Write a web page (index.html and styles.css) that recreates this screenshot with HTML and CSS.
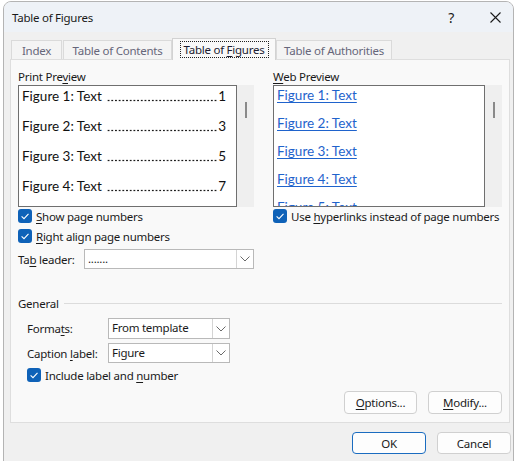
FILE: index.html
```html
<!DOCTYPE html>
<html>
<head>
<meta charset="utf-8">
<link rel="stylesheet" href="styles.css">
</head>
<body>
<div class="window">
  <div class="titlebar">
    <span class="title">Table of Figures</span>
    <span class="help">?</span>
    <svg class="close" width="11" height="11" viewBox="0 0 11 11"><path d="M0.5 0.5 L10.5 10.5 M10.5 0.5 L0.5 10.5" stroke="#1a1a1a" stroke-width="1.1" fill="none"/></svg>
  </div>
  <div class="tabs">
    <div class="tab t-index">Index</div>
    <div class="tab t-toc">Table of Contents</div>
    <div class="tab t-tof selected"><span class="focus">Table of <u>F</u>igures</span></div>
    <div class="tab t-toa">Table of Authorities</div>
  </div>
  <div class="panel">
    <div class="top">
      <div class="col left">
        <div class="label">Print Pre<u>v</u>iew</div>
        <div class="preview-wrap">
          <div class="preview print">
            <div class="pline"><span class="nm">Figure 1: Text</span><span class="dots"></span><span class="pg">1</span></div>
            <div class="pline"><span class="nm">Figure 2: Text</span><span class="dots"></span><span class="pg">3</span></div>
            <div class="pline"><span class="nm">Figure 3: Text</span><span class="dots"></span><span class="pg">5</span></div>
            <div class="pline"><span class="nm">Figure 4: Text</span><span class="dots"></span><span class="pg">7</span></div>
          </div>
          <div class="scroll"><div class="thumb"></div></div>
        </div>
        <div class="cb first"><svg class="box" width="14" height="14" viewBox="0 0 14 14"><rect width="14" height="14" rx="3" fill="#0f62b8"/><path d="M3.6 7.3 L6 9.6 L10.5 4.9" stroke="#fff" stroke-width="1.1" fill="none"/></svg><span><u>S</u>how page numbers</span></div>
        <div class="cb"><svg class="box" width="14" height="14" viewBox="0 0 14 14"><rect width="14" height="14" rx="3" fill="#0f62b8"/><path d="M3.6 7.3 L6 9.6 L10.5 4.9" stroke="#fff" stroke-width="1.1" fill="none"/></svg><span><u>R</u>ight align page numbers</span></div>
        <div class="row leader">
          <span class="lbl">Ta<u>b</u> leader:</span>
          <div class="combo wide"><span class="val">.......</span><span class="drop"><svg width="10" height="6" viewBox="0 0 10 6"><path d="M0.5 0.5 L5 5 L9.5 0.5" stroke="#6a6a6a" stroke-width="1" fill="none"/></svg></span></div>
        </div>
      </div>
      <div class="sep"></div>
      <div class="col right">
        <div class="label"><u>W</u>eb Preview</div>
        <div class="preview-wrap">
          <div class="preview web">
            <div class="wline">Figure 1: Text</div>
            <div class="wline">Figure 2: Text</div>
            <div class="wline">Figure 3: Text</div>
            <div class="wline">Figure 4: Text</div>
            <div class="wline">Figure 5: Text</div>
          </div>
          <div class="scroll wscroll"><div class="thumb"></div></div>
        </div>
        <div class="cb first"><svg class="box" width="14" height="14" viewBox="0 0 14 14"><rect width="14" height="14" rx="3" fill="#0f62b8"/><path d="M3.6 7.3 L6 9.6 L10.5 4.9" stroke="#fff" stroke-width="1.1" fill="none"/></svg><span>Use <u>h</u>yperlinks instead of page numbers</span></div>
      </div>
    </div>
    <div class="general">
      <div class="group-head"><span>General</span><div class="line"></div></div>
      <div class="form">
        <div class="row frow">
          <span class="flbl">Forma<u>t</u>s:</span>
          <div class="combo narrow"><span class="val">From template</span><span class="drop"><svg width="10" height="6" viewBox="0 0 10 6"><path d="M0.5 0.5 L5 5 L9.5 0.5" stroke="#6a6a6a" stroke-width="1" fill="none"/></svg></span></div>
        </div>
        <div class="row frow second">
          <span class="flbl">Caption <u>l</u>abel:</span>
          <div class="combo narrow"><span class="val">Figure</span><span class="drop"><svg width="10" height="6" viewBox="0 0 10 6"><path d="M0.5 0.5 L5 5 L9.5 0.5" stroke="#6a6a6a" stroke-width="1" fill="none"/></svg></span></div>
        </div>
        <div class="cb incl"><svg class="box" width="14" height="14" viewBox="0 0 14 14"><rect width="14" height="14" rx="3" fill="#0f62b8"/><path d="M3.6 7.3 L6 9.6 L10.5 4.9" stroke="#fff" stroke-width="1.1" fill="none"/></svg><span>Include label and <u>n</u>umber</span></div>
      </div>
      <div class="btnrow">
        <button class="btn b-opt"><u>O</u>ptions...</button>
        <button class="btn b-mod"><u>M</u>odify...</button>
      </div>
    </div>
  </div>
  <div class="footer">
    <button class="btn ok">OK</button>
    <button class="btn cancel">Cancel</button>
  </div>
</div>
</body>
</html>
```
FILE: styles.css
```css
* { box-sizing: border-box; }
html, body { margin: 0; background: #ffffff; }
body {
  font-family: "Segoe UI", "Noto Sans", sans-serif;
  font-size: 11.5px;
  letter-spacing: -0.25px;
  color: #1a1a1a;
}
u { text-decoration-thickness: 1px; text-underline-offset: 2px; }

.window {
  margin: 1px 0 0 3px;
  width: 511px;
  height: 470px;
  border: 1px solid #b4b4b4;
  border-radius: 8px;
  overflow: hidden;
  background: #f0f0f0;
}

.titlebar {
  height: 30px;
  background: #eef2f7;
  display: flex;
  align-items: center;
  padding-left: 8px;
}
.title { flex: 1; color: #1a1a1a; }
.help { font-size: 14px; margin-right: 36px; color: #1a1a1a; }
.close { margin-right: 12px; }

.tabs {
  display: flex;
  align-items: flex-end;
  height: 22px;
  margin: 6px 0 0 7px;
}
.tab {
  height: 20px;
  border: 1px solid #dadada;
  border-bottom: none;
  background: #f4f4f4;
  color: #66667a;
  display: flex;
  align-items: center;
  justify-content: center;
  margin-right: 1px;
  white-space: nowrap;
}
.t-index { width: 51px; }
.t-toc { width: 109px; }
.t-tof { width: 104px; }
.t-toa { width: 116px; }
.tab.selected {
  position: relative;
  z-index: 2;
  height: 22px;
  background: #f9f9f9;
  border-color: #d2d2d2;
  color: #1b1b30;
  margin-left: -1px;
  margin-right: 0;
}
.focus {
  border: 1px dotted #222;
  padding: 0 3px;
  line-height: 15px;
}

.panel {
  position: relative;
  z-index: 1;
  margin: -1px 3px 0 6px;
  height: 364px;
  background: #f9f9f9;
  border: 1px solid #dedede;
  padding: 9px 7px 0 7px;
}

.top { display: flex; height: 224px; }
.col { display: flex; flex-direction: column; }
.left { width: 236px; }
.right { width: 229px; }
.sep {
  width: 1px;
  margin: 1px 10px 0 9px;
  background: #9c9c9c;
}
.label { height: 15px; line-height: 15px; margin-bottom: 1px; }

.preview-wrap { display: flex; height: 122px; }
.preview {
  background: #fff;
  border: 1px solid #6f6f6f;
  overflow: hidden;
}
.print { width: 219px; padding: 0 10px 0 3px; }
.web { width: 212px; padding: 0 3px; }
.scroll {
  width: 17px;
  background: #efefef;
  position: relative;
}
.thumb {
  position: absolute;
  left: 8px;
  top: 17px;
  width: 2px;
  height: 16px;
  background: #8a8a8a;
}
.pline {
  display: flex;
  height: 20px;
  line-height: 20px;
  margin-bottom: 10px;
  font-family: "Lato", "Noto Sans", sans-serif;
  font-size: 13.5px;
  letter-spacing: 0;
  color: #111;
  white-space: nowrap;
}
.pline .nm, .pline .pg { flex: none; }
.pline .dots {
  flex: 1 1 0;
  min-width: 0;
  margin: 0 1px 0 4px;
  background-image: radial-gradient(circle at 50% 14.5px, #1a1a1a 0.75px, transparent 1.15px);
  background-size: 3.7px 20px;
  background-repeat: repeat-x;
  background-position: right top;
}
.wline {
  height: 18px;
  line-height: 18px;
  margin-bottom: 10px;
  font-family: "Lato", "Noto Sans", sans-serif;
  font-size: 13.5px;
  letter-spacing: 0;
  color: #1f63cc;
  text-decoration: underline;
  text-underline-offset: 2px;
  white-space: nowrap;
}

.cb { display: flex; align-items: center; height: 16px; margin-top: 4px; white-space: nowrap; }
.cb.first { margin-top: 1px; }
.cb .box { flex: none; margin-right: 4px; }

.row { display: flex; align-items: center; white-space: nowrap; }
.leader { margin-top: 5px; height: 20px; }
.lbl { width: 66px; }
.combo {
  display: flex;
  height: 100%;
  background: #fff;
  border: 1px solid #b9b9b9;
}
.combo.wide { width: 170px; }
.combo .val { flex: 1; padding-left: 3px; line-height: 18px; }
.combo .drop {
  width: 17px;
  border-left: 1px solid #d4d4d4;
  display: flex;
  align-items: center;
  justify-content: center;
}

.general { display: flex; flex-direction: column; }
.group-head { display: flex; align-items: center; height: 20px; }
.group-head .line { flex: 1; height: 1px; background: #dcdcdc; margin-left: 5px; margin-top: 1px; }
.form { padding-left: 9px; }
.frow { height: 21px; margin-top: 5px; }
.frow.second { margin-top: 4px; height: 20px; }
.flbl { width: 81px; }
.combo.narrow { width: 122px; }
.cb.incl { margin-top: 4px; }

.btnrow {
  display: flex;
  justify-content: flex-end;
  gap: 11px;
  margin-top: 8px;
}
.btn {
  height: 23px;
  background: #fdfdfd;
  border: 1px solid #d0d0d0;
  border-radius: 4px;
  font-family: "Segoe UI", "Noto Sans", sans-serif;
  font-size: 11.5px;
  letter-spacing: -0.25px;
  color: #1a1a1a;
  padding: 0;
}
.b-opt { width: 73px; }
.b-mod { width: 74px; }

.footer {
  display: flex;
  justify-content: flex-end;
  gap: 11px;
  margin: 9px 2px 0 0;
}
.ok, .cancel { width: 74px; height: 22px; }
.ok { border-color: #1a6cc0; }
```
